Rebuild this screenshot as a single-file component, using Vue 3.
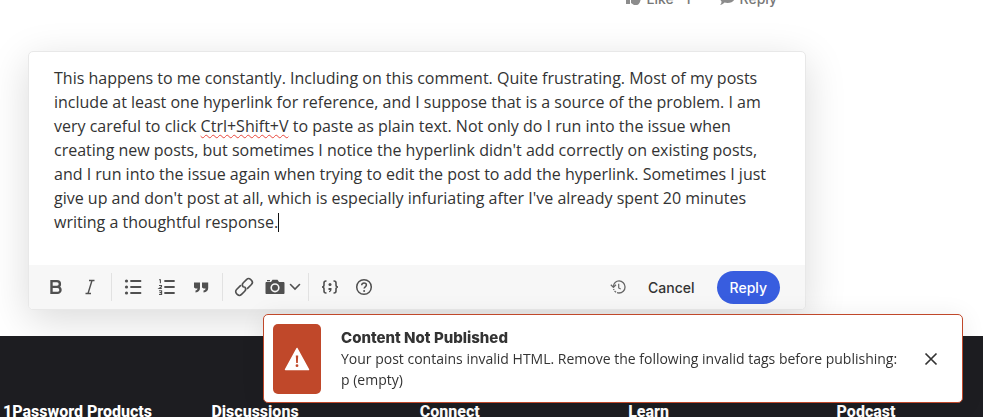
<script setup>
import { ref } from 'vue'

const before = `This happens to me constantly. Including on this comment. Quite frustrating. Most of my posts
include at least one hyperlink for reference, and I suppose that is a source of the problem. I am
very careful to click `
const misspelled = 'Ctrl+Shift+V'
const after = ` to paste as plain text. Not only do I run into the issue when
creating new posts, but sometimes I notice the hyperlink didn't add correctly on existing posts,
and I run into the issue again when trying to edit the post to add the hyperlink. Sometimes I just
give up and don't post at all, which is especially infuriating after I've already spent 20 minutes
writing a thoughtful response.`

const columns = ['1Password Products', 'Discussions', 'Connect', 'Learn', 'Podcast']
const toastOpen = ref(true)
</script>

<template>
  <div class="page">
    <main class="thread">
      <div class="post-actions">
        <button type="button" class="action">
          <svg width="16" height="14" viewBox="0 0 16 14" aria-hidden="true"><path d="M0 5h4v8H0zM5 5l4-5c2 0 2 2 1 4h5c1 1 1 2 0 3 0 2-1 3-1 4-1 2-2 3-3 3H8l-3-2z" /></svg>
          <span>Like</span><span class="count">1</span>
        </button>
        <button type="button" class="action">
          <svg width="15" height="14" viewBox="0 0 15 14" aria-hidden="true"><path d="M7.500 0C12 0 15 2.500 15 6s-3 6-7.500 6c-1 0-2-.2-3-.5C3 13 1.500 14 0 14c1-1 1.500-2 1.500-3.500C.5 9.500 0 8 0 6 0 2.500 3 0 7.500 0z" /></svg>
          <span>Reply</span>
        </button>
      </div>

      <form class="editor" @submit.prevent>
        <div class="body" contenteditable="true" role="textbox" aria-multiline="true" aria-label="Reply text" spellcheck="false">{{ before }}<span class="misspelled">{{ misspelled }}</span>{{ after }}<span class="caret"></span></div>
        <div class="toolbar">
          <div class="tools" role="toolbar" aria-label="Formatting">
            <button type="button" class="tool" aria-label="Bold">
              <svg width="20" height="20" viewBox="0 0 20 20"><path d="M5.500 4.100h5.500a2.900 2.900 0 0 1 0 5.800H5.500zM5.500 9.900h6a3 3 0 0 1 0 6H5.500z" fill="none" stroke="currentColor" stroke-width="2.400" /></svg>
            </button>
            <button type="button" class="tool" aria-label="Italic">
              <svg width="20" height="20" viewBox="0 0 20 20"><path d="M9 3.500h5.500M5.500 16.500H11M12 3.500l-4 13" fill="none" stroke="currentColor" stroke-width="1.400" /></svg>
            </button>
            <span class="rule"></span>
            <button type="button" class="tool" aria-label="Bulleted list">
              <svg width="20" height="20" viewBox="0 0 20 20"><g fill="currentColor"><circle cx="3.500" cy="4" r="1.600" /><circle cx="3.500" cy="10" r="1.600" /><circle cx="3.500" cy="16" r="1.600" /></g><path d="M8 4h9.500M8 10h9.500M8 16h9.500" stroke="currentColor" stroke-width="1.800" stroke-linecap="round" /></svg>
            </button>
            <button type="button" class="tool" aria-label="Numbered list">
              <svg width="20" height="20" viewBox="0 0 20 20"><path d="M8 4h9M8 10h9M8 16h9" stroke="currentColor" stroke-width="1.800" stroke-linecap="round" /><path d="M2 2.800h1.400v3.400M2 8.500h2.500v1.300L2.200 11.500h2.600M2 13.700h2.600v3.800H2M2.500 15.600h2" fill="none" stroke="currentColor" stroke-width="1.100" /></svg>
            </button>
            <button type="button" class="tool" aria-label="Quote">
              <svg width="20" height="20" viewBox="0 0 20 20"><path d="M3 5.500h6v5.500c0 2.500-1.500 4.200-4.500 4.500v-2c1.300-.2 2-1 2-2H4.500L3 10.500zM11 5.500h6.200v5.500c0 2.500-1.500 4.200-4.700 4.500v-2c1.400-.2 2.100-1 2.100-2h-2L11 10.500z" fill="currentColor" /></svg>
            </button>
            <span class="rule"></span>
            <button type="button" class="tool" aria-label="Link">
              <svg width="20" height="20" viewBox="0 0 20 20"><g transform="rotate(-45 10 10)" fill="none" stroke="currentColor" stroke-width="1.600" stroke-linecap="round"><path d="M8.500 6.500H3a3 3 0 0 0-3 3v1a3 3 0 0 0 3 3h4.500a3 3 0 0 0 3-3" /><path d="M11.500 13.500H17a3 3 0 0 0 3-3v-1a3 3 0 0 0-3-3h-4.500a3 3 0 0 0-3 3" /></g></svg>
            </button>
            <button type="button" class="tool media" aria-label="Insert media">
              <svg width="20" height="20" viewBox="0 0 20 20"><path d="M1.500 5H6l1.500-2.200h5L14 5h4.500c.5 0 1 .5 1 1v10c0 .6-.5 1-1 1h-17c-.5 0-1-.4-1-1V6c0-.5.5-1 1-1zM2 3h3v1.200H2z" fill="currentColor" /><circle cx="10" cy="10.800" r="3.800" fill="none" stroke="#f7f7f7" stroke-width="1.600" /></svg>
              <svg width="12" height="20" viewBox="0 0 12 20"><path d="M1.500 7.500L6 12l4.500-4.500" fill="none" stroke="currentColor" stroke-width="1.600" stroke-linecap="round" /></svg>
            </button>
            <span class="rule"></span>
            <button type="button" class="tool" aria-label="Code sample">
              <svg width="20" height="20" viewBox="0 0 20 20"><path d="M6.500 4H6C4.500 4 4 4.700 4 6v2c0 1.300-.6 2-2 2 1.400 0 2 .7 2 2v2c0 1.300.5 2 2 2h.5M13.500 4h.5c1.500 0 2 .7 2 2v2c0 1.300.6 2 2 2-1.400 0-2 .7-2 2v2c0 1.300-.5 2-2 2h-.5" fill="none" stroke="currentColor" stroke-width="1.600" /><circle cx="10" cy="7.500" r="1.500" fill="currentColor" /><path d="M8.500 11h3v1.500c0 1.500-1 2.500-2.500 2.700v-1c.6-.2 1-.6 1-1.200H8.500z" fill="currentColor" /></svg>
            </button>
            <button type="button" class="tool" aria-label="Help">
              <svg width="20" height="20" viewBox="0 0 20 20"><circle cx="10" cy="10" r="7.300" fill="none" stroke="currentColor" stroke-width="1.500" /><path d="M7.700 8.200c0-1.400 1-2.200 2.300-2.200s2.400.8 2.400 2.100c0 1.700-2.300 1.800-2.300 3.500" fill="none" stroke="currentColor" stroke-width="1.500" /><circle cx="10.100" cy="13.900" r="1" fill="currentColor" /></svg>
            </button>
          </div>
          <div class="submit">
            <button type="button" class="history" aria-label="Version history">
              <svg width="16" height="16" viewBox="0 0 16 16" fill="none" stroke="currentColor"><path d="M3.500 7.500a5.600 5.600 0 0 1 5.600-5.600" stroke-width="1.200" /><path d="M9 1.900a6 6 0 0 1 0 12.100" stroke-width="1.300" /><path d="M9 14a5.600 5.600 0 0 1-5.400-4" stroke-width="1.300" stroke-dasharray="2 1" /><path d="M.8 5.800l2.600 2.500 2.600-2.500M8.700 4.800V9l2 1" stroke-width="1.200" /></svg>
            </button>
            <button type="button" class="cancel">Cancel</button>
            <button type="submit" class="reply">Reply</button>
          </div>
        </div>
      </form>
    </main>

    <footer class="footer">
      <h2 v-for="name in columns" :key="name">{{ name }}</h2>
    </footer>

    <div v-if="toastOpen" class="toast" role="alert">
      <div class="badge">
        <svg width="26" height="24" viewBox="0 0 26 24" aria-hidden="true"><path d="M13 1.500L24.500 22.500H1.500z" fill="#fff" stroke="#fff" stroke-width="1.500" stroke-linejoin="round" /><path d="M11.800 8.500h2.400l-.4 7.500h-1.600z" fill="#c0482a" /><circle cx="13" cy="18.700" r="1.400" fill="#c0482a" /></svg>
      </div>
      <div class="message">
        <strong>Content Not Published</strong>
        <p>Your post contains invalid HTML. Remove the following invalid tags before publishing:<br />p (empty)</p>
      </div>
      <button type="button" class="close" aria-label="Close" @click="toastOpen = false">
        <svg width="14" height="14" viewBox="0 0 14 14"><path d="M1.500 1.500l11 11M12.500 1.500l-11 11" stroke="currentColor" stroke-width="1.700" /></svg>
      </button>
    </div>
  </div>
</template>

<style>
body {
  background: #fff;
}
</style>

<style scoped>
.page {
  display: flex;
  flex-direction: column;
  height: 100vh;
  overflow: hidden;
  font-family: Inter, "Liberation Sans", sans-serif;
  color: #333;
}

button {
  border: 0;
  padding: 0;
  background: none;
  font: inherit;
  color: inherit;
  cursor: pointer;
}

.thread {
  flex: none;
  padding: 0 177px 26px 28px;
}

/* The row above the editor is scrolled partly out of view. */
.post-actions {
  display: flex;
  justify-content: flex-end;
  gap: 29px;
  height: 20px;
  margin: -12px 29px 43px 0;
  color: #777;
  font-size: 14px;
  font-weight: 500;
}

.action {
  display: flex;
  align-items: center;
  gap: 5px;
  height: 20px;
}

.action svg {
  fill: #8c8c8c;
}

.count {
  margin-left: 6px;
}

.editor {
  border: 1px solid #e8e8e8;
  border-radius: 5px;
  background: #fff;
  box-shadow: 0 10px 40px rgba(0, 0, 0, 0.15);
}

.body {
  padding: 14px 25px 31px;
  font-family: "Open Sans", "Liberation Sans", sans-serif;
  font-size: 16px;
  line-height: 24px;
  white-space: pre;
  outline: none;
}

.misspelled {
  text-decoration: underline wavy #e8483c 1px;
  text-underline-offset: 2px;
  text-decoration-skip-ink: none;
}

.caret {
  display: inline-block;
  width: 1px;
  height: 19px;
  background: #111;
  vertical-align: -4px;
}

.toolbar {
  display: flex;
  align-items: center;
  justify-content: space-between;
  height: 44px;
  padding: 0 25px 0 11px;
  border-radius: 0 0 4px 4px;
  background: #f7f7f7;
}

.tools {
  display: flex;
  align-items: center;
  gap: 2px;
  color: #505050;
}

.tool {
  display: flex;
  align-items: center;
  justify-content: center;
  width: 32px;
  height: 32px;
}

.tool svg {
  overflow: visible;
}

.tool.media {
  width: 41px;
  gap: 4px;
}

.rule {
  width: 1px;
  height: 28px;
  margin: 0 3px;
  background: #e2e2e2;
}

.submit {
  display: flex;
  align-items: center;
  gap: 22px;
  font-size: 14px;
  font-weight: 500;
}

.history {
  display: flex;
  color: #666;
}

.reply {
  height: 33px;
  padding: 0 13px;
  border-radius: 17px;
  background: #385ddf;
  color: #fff;
}

.footer {
  display: grid;
  grid-template-columns: repeat(5, 1fr);
  flex: 1;
  min-height: 0;
  overflow: hidden;
  padding: 64px 0 0 3px;
  margin-right: -62px;
  background: #1d1d21;
}

.footer h2 {
  margin: 0;
  color: #fff;
  font-family: Roboto, "Liberation Sans", sans-serif;
  font-size: 16px;
  font-weight: 800;
  line-height: 24px;
}

.toast {
  position: fixed;
  right: 20px;
  bottom: 14px;
  left: 263px;
  display: flex;
  gap: 20px;
  padding: 9px 24px 8px 9px;
  border: 1px solid #c0482a;
  border-radius: 5px;
  background: #fff;
  box-shadow: 0 2px 24px rgba(0, 0, 0, 0.08);
}

.badge {
  display: flex;
  flex: none;
  align-items: center;
  justify-content: center;
  width: 48px;
  border-radius: 5px;
  background: #c0482a;
}

.message {
  flex: 1;
  padding: 3px 0 4px;
  font-size: 14px;
  line-height: 21px;
  white-space: nowrap;
}

.message strong {
  display: block;
  font-size: 15px;
  font-weight: 800;
}

.message p {
  margin: 0;
  font-family: "Open Sans", "Liberation Sans", sans-serif;
}

.close {
  display: flex;
  align-items: center;
}
</style>
